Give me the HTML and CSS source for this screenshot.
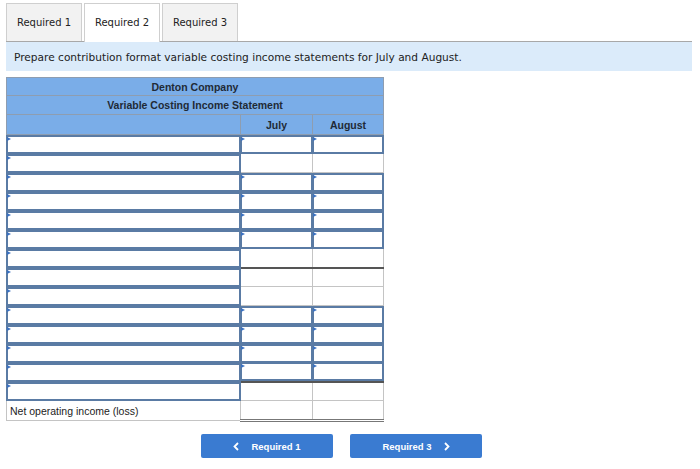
FILE: index.html
```html
<!DOCTYPE html>
<html lang="en">
<head>
    <meta charset="UTF-8">
    <title>Required 2</title>
    <link rel="stylesheet" href="styles.css">
</head>
<body>
    <div class="tabs">
        <div class="tab">Required 1</div>
        <div class="tab active">Required 2</div>
        <div class="tab">Required 3</div>
    </div>
    <div class="instruction">Prepare contribution format variable costing income statements for July and August.</div>

    <table class="statement">
        <tr class="head h1"><th colspan="3">Denton Company</th></tr>
        <tr class="head"><th colspan="3">Variable Costing Income Statement</th></tr>
        <tr class="head cols"><th></th><th>July</th><th>August</th></tr>

        <tr><td><div class="inp"></div></td><td><div class="inp"></div></td><td><div class="inp"></div></td></tr>
        <tr><td><div class="inp"></div></td><td></td><td></td></tr>
        <tr><td><div class="inp"></div></td><td><div class="inp"></div></td><td><div class="inp"></div></td></tr>
        <tr><td><div class="inp"></div></td><td><div class="inp"></div></td><td><div class="inp"></div></td></tr>
        <tr><td><div class="inp"></div></td><td><div class="inp"></div></td><td><div class="inp"></div></td></tr>
        <tr><td><div class="inp"></div></td><td><div class="inp"></div></td><td><div class="inp"></div></td></tr>
        <tr><td><div class="inp"></div></td><td></td><td></td></tr>
        <tr class="sub"><td><div class="inp"></div></td><td></td><td></td></tr>
        <tr><td><div class="inp"></div></td><td></td><td></td></tr>
        <tr><td><div class="inp"></div></td><td><div class="inp"></div></td><td><div class="inp"></div></td></tr>
        <tr><td><div class="inp"></div></td><td><div class="inp"></div></td><td><div class="inp"></div></td></tr>
        <tr><td><div class="inp"></div></td><td><div class="inp"></div></td><td><div class="inp"></div></td></tr>
        <tr><td><div class="inp"></div></td><td><div class="inp"></div></td><td><div class="inp"></div></td></tr>
        <tr class="sub"><td><div class="inp"></div></td><td></td><td></td></tr>
        <tr class="total"><td class="label">Net operating income (loss)</td><td></td><td></td></tr>
    </table>

    <div class="nav">
        <a class="btn" href="#">
            <svg class="chev" width="6" height="9" viewBox="0 0 6 9"><polyline points="5,1 1.5,4.5 5,8" fill="none" stroke="#fff" stroke-width="1.8"/></svg>
            Required 1
        </a>
        <a class="btn" href="#">
            Required 3
            <svg class="chev" width="6" height="9" viewBox="0 0 6 9"><polyline points="1,1 4.5,4.5 1,8" fill="none" stroke="#fff" stroke-width="1.8"/></svg>
        </a>
    </div>
</body>
</html>
```

FILE: styles.css
```css
body {
    margin: 0;
    padding: 3px 0 0 6px;
    font-family: "DejaVu Sans", Verdana, sans-serif;
    color: #222;
    background: #fff;
}
.tabs {
    display: flex;
    gap: 2px;
    width: 686px;
    border-bottom: 1px solid #a8a8a8;
}
.tab {
    width: 74px;
    height: 37px;
    line-height: 37px;
    text-align: center;
    font-size: 10px;
    background: #f2f2f2;
    border: 1px solid #cfcfcf;
    border-bottom: none;
    margin-bottom: -1px;
}
.tab.active {
    background: #fff;
    height: 38px;
}
.instruction {
    width: 678px;
    height: 29px;
    line-height: 30px;
    padding-left: 8px;
    font-size: 10.6px;
    background: #dbebfa;
}
.statement {
    margin-top: 6px;
    border-collapse: collapse;
    font-family: "Liberation Sans", Arial, sans-serif;
    font-size: 10.5px;
    border: 1px solid #b9c3cd;
}
.statement td, .statement th {
    padding: 0;
    height: 19px;
    border: 1px solid #c4c4c4;
    box-sizing: border-box;
}
.statement td:first-child { width: 234px; }
.statement td:nth-child(2) { width: 72px; }
.statement td:nth-child(3) { width: 71px; }
.head th {
    height: 19px;
    background: #7aade8;
    border: 1px solid #8e9db0;
    border-left-color: #7aade8;
    border-right-color: #7aade8;
    font-weight: bold;
    color: #1f2a36;
    text-align: center;
}
.h1 th { height: 18px; }
.head th:first-child { border-left: 1px solid #8e9db0; }
.head th:last-child { border-right: 1px solid #8e9db0; }
.cols th { height: 20px; border-left: 1px solid #8e9db0; border-right: 1px solid #8e9db0; }
.inp {
    position: relative;
    height: 19px;
    border: 2px solid #5a7ba4;
    box-sizing: border-box;
    background: #fff;
    margin: -1px;
}
.inp::before {
    content: "";
    position: absolute;
    left: -1px;
    top: 0;
    border-left: 4px solid #3c72c0;
    border-top: 2.5px solid transparent;
    border-bottom: 2.5px solid transparent;
}
.sub td + td { border-top: 2px solid #555; }
.total td { height: 20px; }
.total td + td { border-bottom: 3px double #777; }
.label {
    padding-left: 3px !important;
    vertical-align: middle;
}
.nav {
    display: flex;
    gap: 17px;
    margin: 12px 0 0 195px;
}
.btn {
    display: flex;
    align-items: center;
    justify-content: center;
    gap: 12px;
    width: 132px;
    height: 24px;
    background: #3a7bd1;
    color: #fff;
    border-radius: 2px;
    font-family: "Liberation Sans", Arial, sans-serif;
    font-weight: bold;
    font-size: 9.5px;
    text-decoration: none;
}
.chev { display: block; }
```
